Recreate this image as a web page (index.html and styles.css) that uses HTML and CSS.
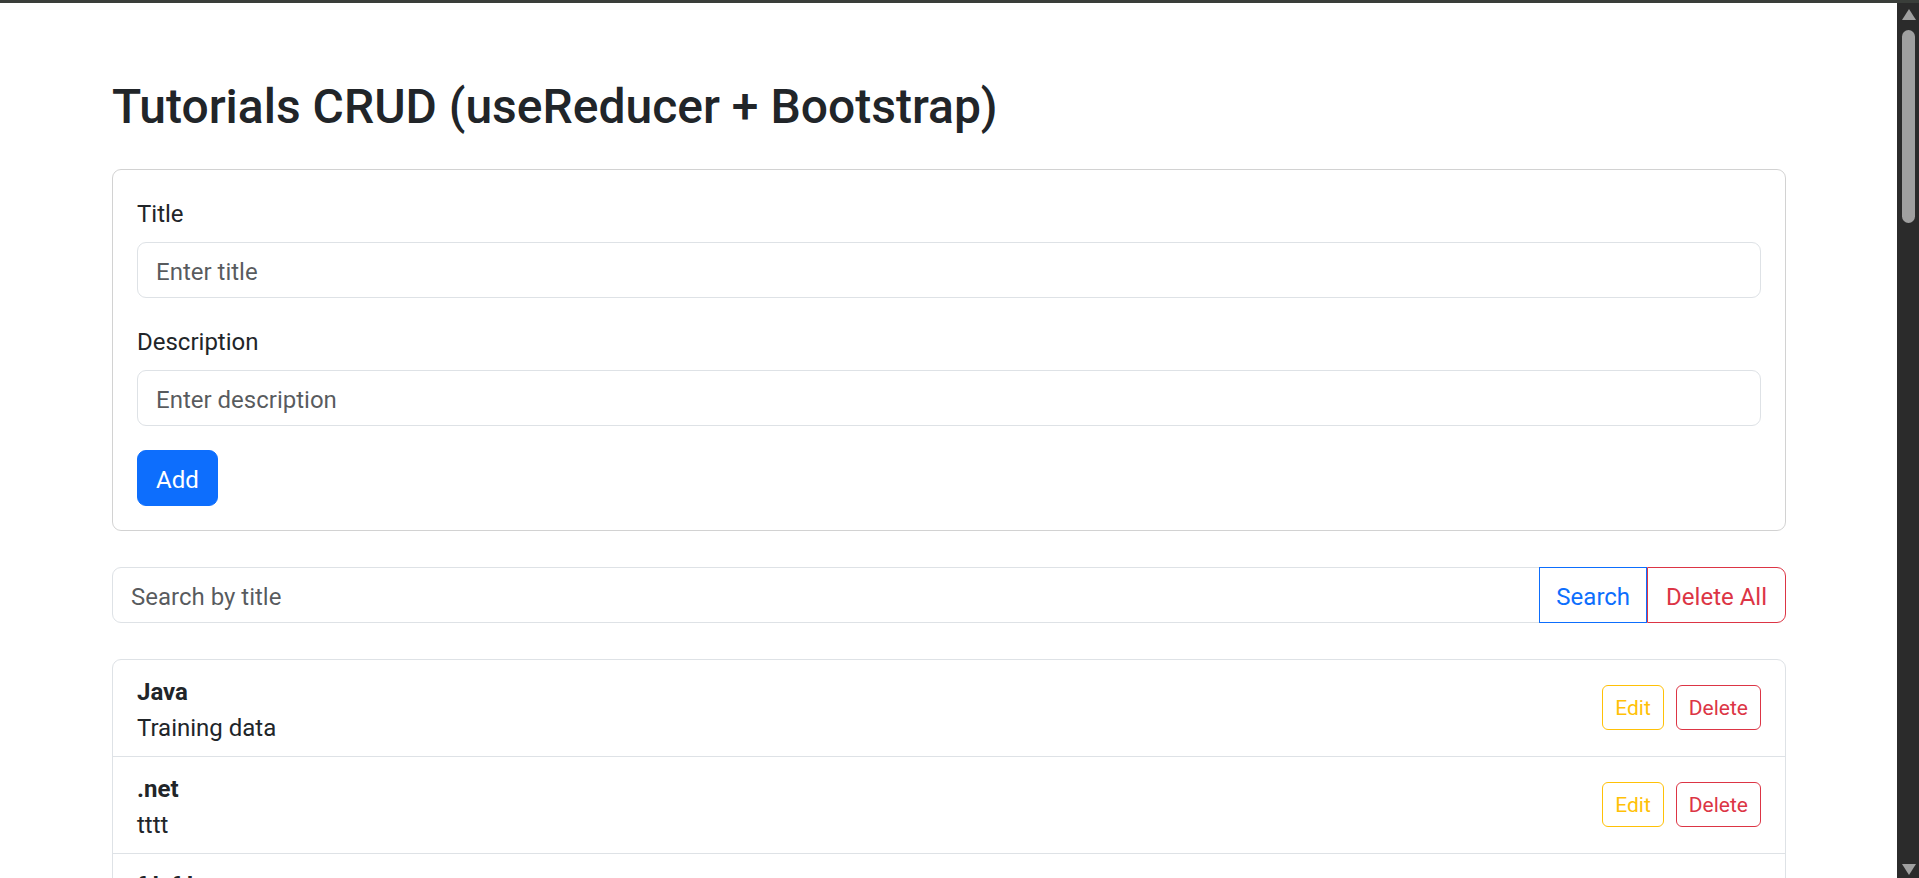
FILE: index.html
```html
<!DOCTYPE html>
<html lang="en">
<head>
<meta charset="utf-8">
<title>Tutorials CRUD</title>
<link rel="stylesheet" href="styles.css">
</head>
<body>
<div class="screen">
  <div class="topbar"></div>
  <div class="viewport">
    <main class="page">
      <div class="container">
        <h2 class="heading">Tutorials CRUD (useReducer + Bootstrap)</h2>

        <section class="card">
          <div class="field">
            <label class="label" for="title">Title</label>
            <input class="control" id="title" type="text" placeholder="Enter title">
          </div>
          <div class="field">
            <label class="label" for="desc">Description</label>
            <input class="control" id="desc" type="text" placeholder="Enter description">
          </div>
          <button class="btn btn-primary" type="button">Add</button>
        </section>

        <div class="input-group">
          <input class="control control-group" type="text" placeholder="Search by title">
          <button class="btn btn-outline-primary btn-mid" type="button">Search</button>
          <button class="btn btn-outline-danger btn-end" type="button">Delete All</button>
        </div>

        <ul class="list">
          <li class="item">
            <div class="item-text">
              <strong class="item-title">Java</strong>
              <div class="item-desc">Training data</div>
            </div>
            <div class="actions">
              <button class="btn-sm btn-outline-warning" type="button">Edit</button>
              <button class="btn-sm btn-outline-danger" type="button">Delete</button>
            </div>
          </li>
          <li class="item">
            <div class="item-text">
              <strong class="item-title">.net</strong>
              <div class="item-desc">tttt</div>
            </div>
            <div class="actions">
              <button class="btn-sm btn-outline-warning" type="button">Edit</button>
              <button class="btn-sm btn-outline-danger" type="button">Delete</button>
            </div>
          </li>
          <li class="item">
            <div class="item-text">
              <strong class="item-title">fdsfds</strong>
              <div class="item-desc">fdsfds</div>
            </div>
            <div class="actions">
              <button class="btn-sm btn-outline-warning" type="button">Edit</button>
              <button class="btn-sm btn-outline-danger" type="button">Delete</button>
            </div>
          </li>
        </ul>
      </div>
    </main>
    <div class="scrollbar">
      <div class="arrow-up"></div>
      <div class="thumb"></div>
      <div class="track-rest"></div>
      <div class="arrow-down"></div>
    </div>
  </div>
</div>
</body>
</html>
```

FILE: styles.css
```css
* { box-sizing: border-box; }

html, body {
  margin: 0;
  padding: 0;
  height: 100%;
  overflow: hidden;
  background: #ffffff;
}

body {
  font-family: Roboto, "Liberation Sans", Arial, sans-serif;
  font-size: 24px;
  line-height: 36px;
  color: #212529;
}

.screen {
  display: flex;
  flex-direction: column;
  height: 878px;
}

.topbar {
  height: 3px;
  flex: 0 0 3px;
  background: #3a3e3a;
}

.viewport {
  flex: 1;
  display: flex;
  min-height: 0;
}

.page {
  flex: 1;
  min-width: 0;
  overflow: hidden;
  padding: 0 111px 0 112px;
}

.container {
  width: 100%;
}

.heading {
  margin: 75px 0 33px;
  font-size: 48px;
  line-height: 58px;
  font-weight: 500;
  color: #212529;
}

.card {
  border: 1px solid rgba(0, 0, 0, 0.175);
  border-radius: 9px;
  padding: 24px;
  margin-bottom: 36px;
  display: flex;
  flex-direction: column;
  align-items: flex-start;
}

.field {
  width: 100%;
  margin-bottom: 24px;
}

.label {
  display: block;
  padding-top: 2px;
  margin-bottom: 10px;
}

.control {
  display: block;
  width: 100%;
  height: 56px;
  padding: 11px 18px 7px;
  font-family: inherit;
  font-size: 24px;
  line-height: 36px;
  color: #212529;
  background: #ffffff;
  border: 1px solid #dee2e6;
  border-radius: 9px;
  outline: none;
}

.control::placeholder {
  color: rgba(33, 37, 41, 0.75);
  opacity: 1;
}

.btn {
  display: inline-block;
  height: 56px;
  padding: 11px 18px 7px;
  font-family: inherit;
  font-size: 24px;
  line-height: 36px;
  border: 1px solid transparent;
  border-radius: 9px;
  background: transparent;
  cursor: pointer;
  white-space: nowrap;
}

.btn-sm {
  display: inline-block;
  height: 45px;
  padding: 7px 12px 5px;
  font-family: inherit;
  font-size: 21px;
  line-height: 31px;
  background: transparent;
  border: 1px solid transparent;
  border-radius: 6px;
  cursor: pointer;
  white-space: nowrap;
}

.btn-primary {
  background: #0d6efd;
  border-color: #0d6efd;
  color: #ffffff;
}

.btn-outline-primary {
  color: #0d6efd;
  border-color: #0d6efd;
}

.btn-outline-danger {
  color: #dc3545;
  border-color: #dc3545;
}

.btn-outline-warning {
  color: #ffc107;
  border-color: #ffc107;
}

.input-group {
  display: flex;
  align-items: stretch;
  width: 100%;
  margin-bottom: 36px;
}

.control-group {
  flex: 1;
  min-width: 0;
  border-radius: 9px 0 0 9px;
}

.btn-mid {
  border-radius: 0;
  margin-left: -1px;
  padding-left: 16px;
  padding-right: 16px;
}

.btn-end {
  border-radius: 0 9px 9px 0;
}

.list {
  list-style: none;
  margin: 0;
  padding: 0;
  border: 1px solid #dee2e6;
  border-radius: 9px;
}

.item {
  display: flex;
  justify-content: space-between;
  align-items: center;
  padding: 12px 24px 10px;
  border-top: 1px solid #dee2e6;
}

.item:first-child {
  border-top: 0;
}

.item-text {
  display: flex;
  flex-direction: column;
  padding-top: 2px;
}

.item-title {
  font-weight: 700;
}

.actions {
  display: flex;
  gap: 12px;
  margin-top: -3px;
}

.scrollbar {
  flex: 0 0 22px;
  width: 22px;
  background: #2b2b2b;
  display: flex;
  flex-direction: column;
  align-items: center;
  padding: 0 4px 0 5px;
}

.arrow-up {
  margin-top: 6px;
  width: 0;
  height: 0;
  border-left: 7px solid transparent;
  border-right: 7px solid transparent;
  border-bottom: 11px solid #a0a0a0;
}

.thumb {
  margin-top: 10px;
  width: 13px;
  height: 193px;
  border-radius: 7px;
  background: #a0a0a0;
}

.track-rest {
  flex: 1;
}

.arrow-down {
  margin-bottom: 3px;
  width: 0;
  height: 0;
  border-left: 7px solid transparent;
  border-right: 7px solid transparent;
  border-top: 11px solid #a0a0a0;
}
```
